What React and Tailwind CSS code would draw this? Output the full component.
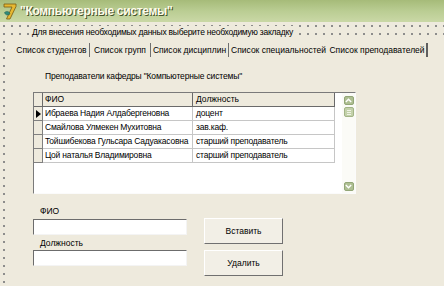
import React from "react";

const teachers = [
  { name: "Ибраева Надия Алдабергеновна", post: "доцент", current: true },
  { name: "Смайлова Улмекен Мухитовна", post: "зав.каф." },
  { name: "Тойшибекова Гульсара Садуакасовна", post: "старший преподаватель" },
  { name: "Цой наталья Владимировна", post: "старший преподаватель" },
];

// fixed widths so the tab captions sit where the designer put them
const tabs = [
  { label: "Список студентов", cls: "w-[76px] border-r border-r-[#6f6f6f]" },
  { label: "Список групп", cls: "w-[61px] border-r border-r-[#6f6f6f]" },
  { label: "Список дисциплин", cls: "w-[78px] border-r border-r-[#6f6f6f]" },
  { label: "Список специальностей", cls: "w-[99px]" },
  { label: "Список преподавателей", cls: "w-[100px] border-r-2 border-r-[#5f5f5f]" },
];

const AppIcon = () => (
  <svg width="14" height="17" viewBox="0 0 14 17">
    <path d="M1 1h12v2.5L7 16H3.5L9 4H1z" fill="#e6b832" stroke="#7a5a10" strokeWidth="0.8" />
    <path d="M1.5 9.5c2.5-2 5-1 5.5 1.5-2.5 1.8-4.8 1-5.5-1.5z" fill="#2f8a78" stroke="#1e5a4e" strokeWidth="0.5" />
  </svg>
);

const Chevron = ({ up }) => (
  <svg width="7" height="5" viewBox="0 0 7 5">
    <path
      d={up ? "M0.8 4L3.5 1.3 6.2 4" : "M0.8 1L3.5 3.7 6.2 1"}
      fill="none"
      stroke="#ffffff"
      strokeWidth="1.4"
    />
  </svg>
);

const TeachersGrid = () => (
  <div className="w-[323px] h-[102px] flex border border-t-[#7a7a7a] border-l-[#7a7a7a] border-b-[#fbfbfb] border-r-[#fbfbfb] bg-white">
    {/* Table */}
    <div className="w-[308px] flex flex-col">
      <div className="h-[14px] flex">
        <div className="w-[9px] bg-[#eeeadd] border-r border-b border-r-[#6a6a6a] border-b-[#6a6a6a]" />
        <div className="w-[150px] pl-[2px] flex items-center bg-[#eeeadd] border-r border-b border-r-[#6a6a6a] border-b-[#6a6a6a]">
          ФИО
        </div>
        <div className="w-[142px] pl-[3px] flex items-center bg-[#eeeadd] border-r border-b border-r-[#6a6a6a] border-b-[#6a6a6a]">
          Должность
        </div>
      </div>
      {teachers.map((t) => (
        <div key={t.name} className="h-[14px] flex tracking-[-0.2px]">
          <div className="w-[9px] flex items-center justify-center bg-[#eeeadd] border-r border-b border-r-[#808080] border-b-[#808080]">
            {t.current && (
              <svg width="5" height="8" viewBox="0 0 5 8">
                <path d="M0 0L5 4 0 8z" fill="#000" />
              </svg>
            )}
          </div>
          <div className="w-[150px] pl-[2px] flex items-center whitespace-nowrap overflow-hidden border-r border-b border-[#c6c6c6]">
            {t.name}
          </div>
          <div className="w-[142px] pl-[3px] flex items-center whitespace-nowrap border-r border-b border-[#c6c6c6]">
            {t.post}
          </div>
        </div>
      ))}
    </div>

    {/* Scrollbar (XP olive) */}
    <div className="w-[13px] flex flex-col items-center bg-[#fbfbf7]">
      <div className="mt-[3px] w-[10px] h-[9px] rounded-[2px] bg-[#aebf92] border border-[#93a677] flex items-center justify-center">
        <Chevron up />
      </div>
      <div className="mt-[2px] w-[10px] h-[10px] rounded-[2px] bg-[#c3d1aa] border border-[#a3b487] flex flex-col items-center justify-center gap-[1px]">
        <div className="w-[4px] h-px bg-[#eef2e4]" />
        <div className="w-[4px] h-px bg-[#eef2e4]" />
        <div className="w-[4px] h-px bg-[#eef2e4]" />
      </div>
      <div className="mt-auto mb-[2px] w-[10px] h-[9px] rounded-[2px] bg-[#aebf92] border border-[#93a677] flex items-center justify-center">
        <Chevron />
      </div>
    </div>
  </div>
);

export default function App() {
  return (
    <div className="w-[444px] h-[286px] overflow-hidden flex flex-col bg-[#eeeadd] font-['Liberation_Sans',Arial,sans-serif] text-[8.5px] leading-none text-black">
      {/* Title bar */}
      <div className="h-[22px] shrink-0 flex items-center gap-[3px] pl-[3px] bg-linear-to-b from-[#a6bb79] via-[#bacd93] to-[#cad8a6]">
        <AppIcon />
        <span className="text-[12px] font-bold tracking-[-0.3px] text-[#fdfbea] [text-shadow:1px_1px_0_#45532a]">
          "Компьютерные системы"
        </span>
      </div>

      {/* Form designer surface with grid dots */}
      <div className="flex-1 flex flex-col [background-image:radial-gradient(circle,#8a8a8a_0.7px,transparent_1px)] [background-size:8px_8px]">
        <div className="h-[19px] shrink-0 flex items-center pl-[32px] pt-[2px]">
          <span className="bg-[#eeeadd] py-[2px] tracking-[-0.25px]">
            Для внесения необходимых данных выберите необходимую закладку
          </span>
        </div>

        {/* Page control */}
        <div className="flex-1 ml-[10px] flex flex-col bg-[#eeeadd]">
          <div className="h-[16px] shrink-0 flex pl-[4px] pt-[2px]">
            {tabs.map((tab) => (
              <div key={tab.label} className={`flex items-center justify-center whitespace-nowrap ${tab.cls}`}>
                {tab.label}
              </div>
            ))}
          </div>

          {/* Tab sheet */}
          <div className="flex-1 flex flex-col pl-[23px] pt-[13px]">
            <div className="h-[13px] pl-[12px] flex items-center tracking-[-0.15px]">
              Преподаватели кафедры "Компьютерные системы"
            </div>

            <div className="mt-[9px]">
              <TeachersGrid />
            </div>

            <div className="mt-[11px] flex gap-[17px]">
              <div className="flex flex-col w-[154px]">
                <div className="h-[13px] pl-[7px] flex items-center">ФИО</div>
                <input className="mt-[1px] h-[16px] w-full bg-white border border-t-[#6c6c6c] border-l-[#6c6c6c] border-b-[#f4f4f4] border-r-[#f4f4f4] outline-none" />
                <div className="mt-[2px] h-[13px] pl-[7px] flex items-center">Должность</div>
                <input className="h-[16px] w-full bg-white border border-t-[#6c6c6c] border-l-[#6c6c6c] border-b-[#f4f4f4] border-r-[#f4f4f4] outline-none" />
              </div>

              <div className="flex flex-col gap-[6px] pt-[13px]">
                <button className="w-[79px] h-[26px] bg-[#f2efe6] border border-t-white border-l-white border-r-[#707070] border-b-[#707070] text-[8.5px]">
                  Вставить
                </button>
                <button className="w-[79px] h-[26px] bg-[#f2efe6] border border-t-white border-l-white border-r-[#707070] border-b-[#707070] text-[8.5px]">
                  Удалить
                </button>
              </div>
            </div>
          </div>
        </div>
      </div>
    </div>
  );
}
